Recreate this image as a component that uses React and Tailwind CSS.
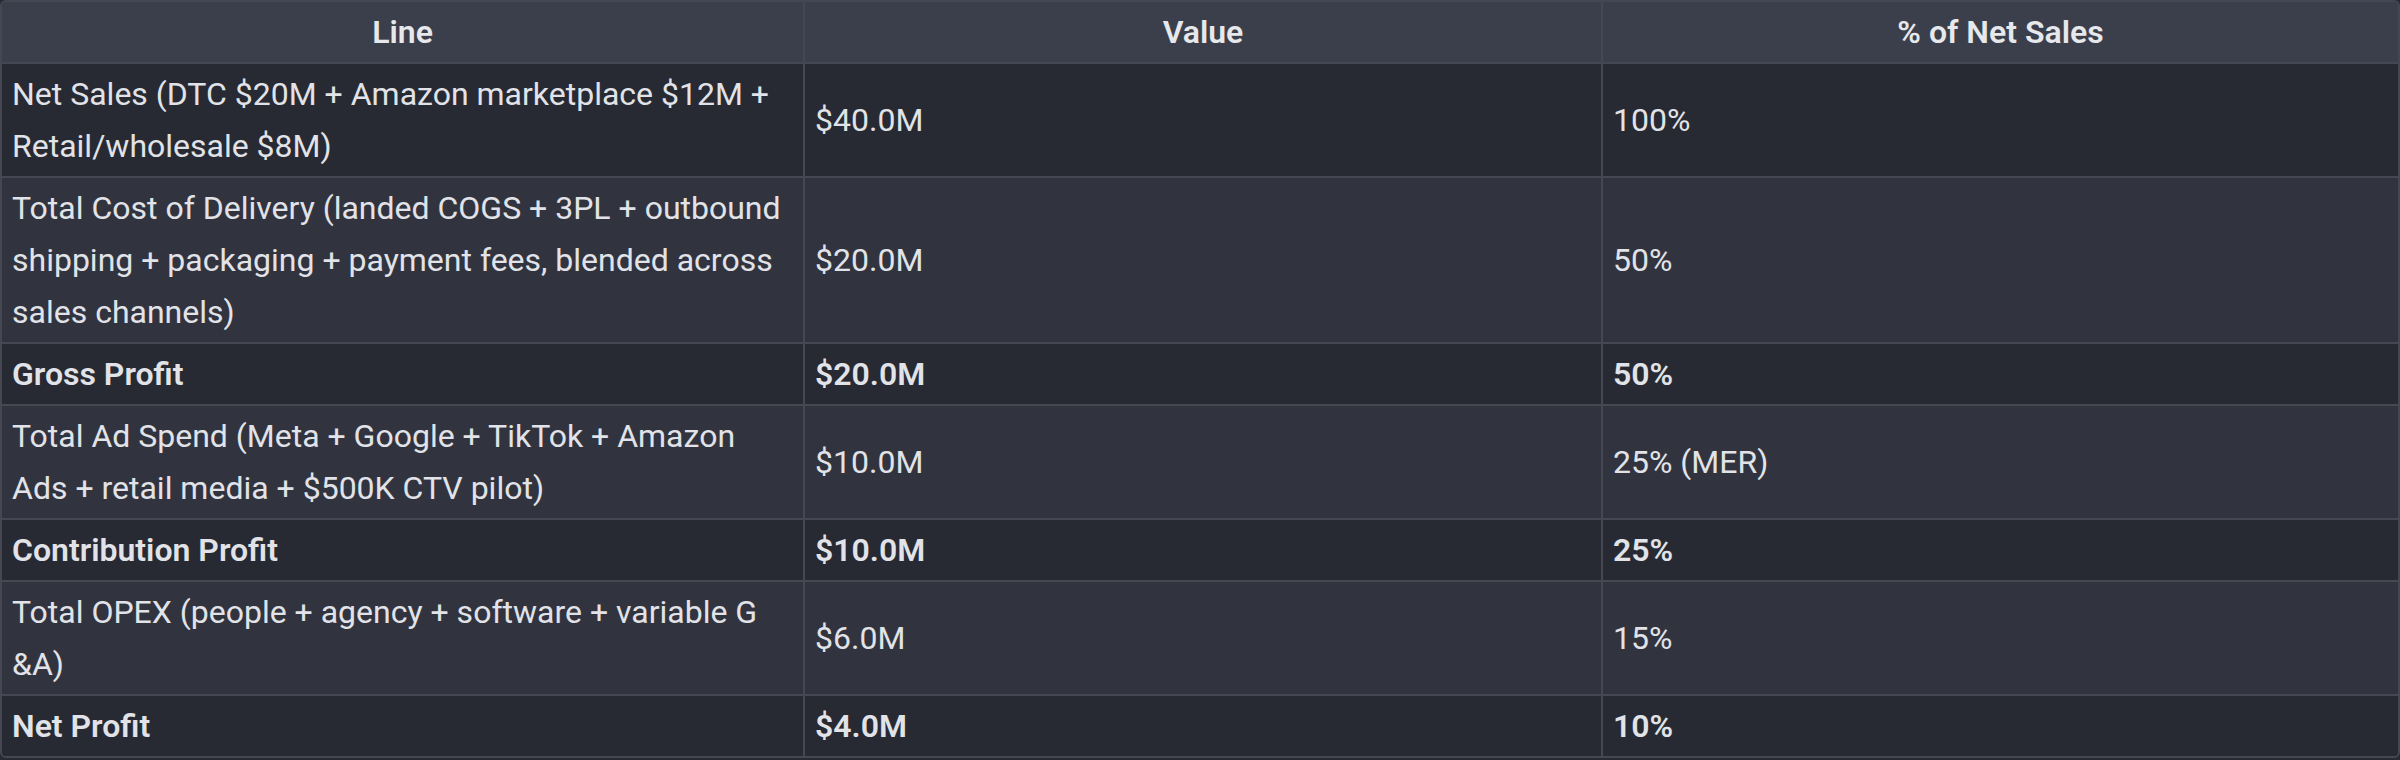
const rows = [
  {
    line: ["Net Sales (DTC $20M + Amazon marketplace $12M +", "Retail/wholesale $8M)"],
    value: "$40.0M",
    pct: "100%",
  },
  {
    line: [
      "Total Cost of Delivery (landed COGS + 3PL + outbound",
      "shipping + packaging + payment fees, blended across",
      "sales channels)",
    ],
    value: "$20.0M",
    pct: "50%",
  },
  { line: ["Gross Profit"], value: "$20.0M", pct: "50%", bold: true },
  {
    line: ["Total Ad Spend (Meta + Google + TikTok + Amazon", "Ads + retail media + $500K CTV pilot)"],
    value: "$10.0M",
    pct: "25% (MER)",
  },
  { line: ["Contribution Profit"], value: "$10.0M", pct: "25%", bold: true },
  {
    line: ["Total OPEX (people + agency + software + variable G", "&A)"],
    value: "$6.0M",
    pct: "15%",
  },
  { line: ["Net Profit"], value: "$4.0M", pct: "10%", bold: true },
];

const cell = "border-2 border-[#454853] px-[10px] py-[4px] align-middle";

export default function App() {
  return (
    <div className="w-[2400px] h-[760px] bg-[#272a32] font-['Roboto','Noto_Sans',sans-serif] text-[32px] leading-[52px] text-[#e1e3e8]">
      <div className="rounded-md border-2 border-[#454853] overflow-hidden">
        <table className="w-full table-fixed border-collapse border-hidden">
          <thead>
            <tr className="bg-[#3b3f4b]">
              <th className={`${cell} w-[802px] font-semibold text-center text-[#e6e8ec]`}>Line</th>
              <th className={`${cell} w-[798px] font-semibold text-center text-[#e6e8ec]`}>Value</th>
              <th className={`${cell} font-semibold text-center text-[#e6e8ec]`}>% of Net Sales</th>
            </tr>
          </thead>
          <tbody>
            {rows.map((r, i) => (
              <tr key={i} className={i % 2 === 0 ? "bg-[#272a32]" : "bg-[#31343f]"}>
                <td className={`${cell} whitespace-nowrap ${r.bold ? "font-semibold" : ""}`}>
                  {r.line.map((l, j) => (
                    <div key={j}>{l}</div>
                  ))}
                </td>
                <td className={`${cell} ${r.bold ? "font-semibold" : ""}`}>{r.value}</td>
                <td className={`${cell} ${r.bold ? "font-semibold" : ""}`}>{r.pct}</td>
              </tr>
            ))}
          </tbody>
        </table>
      </div>
    </div>
  );
}
